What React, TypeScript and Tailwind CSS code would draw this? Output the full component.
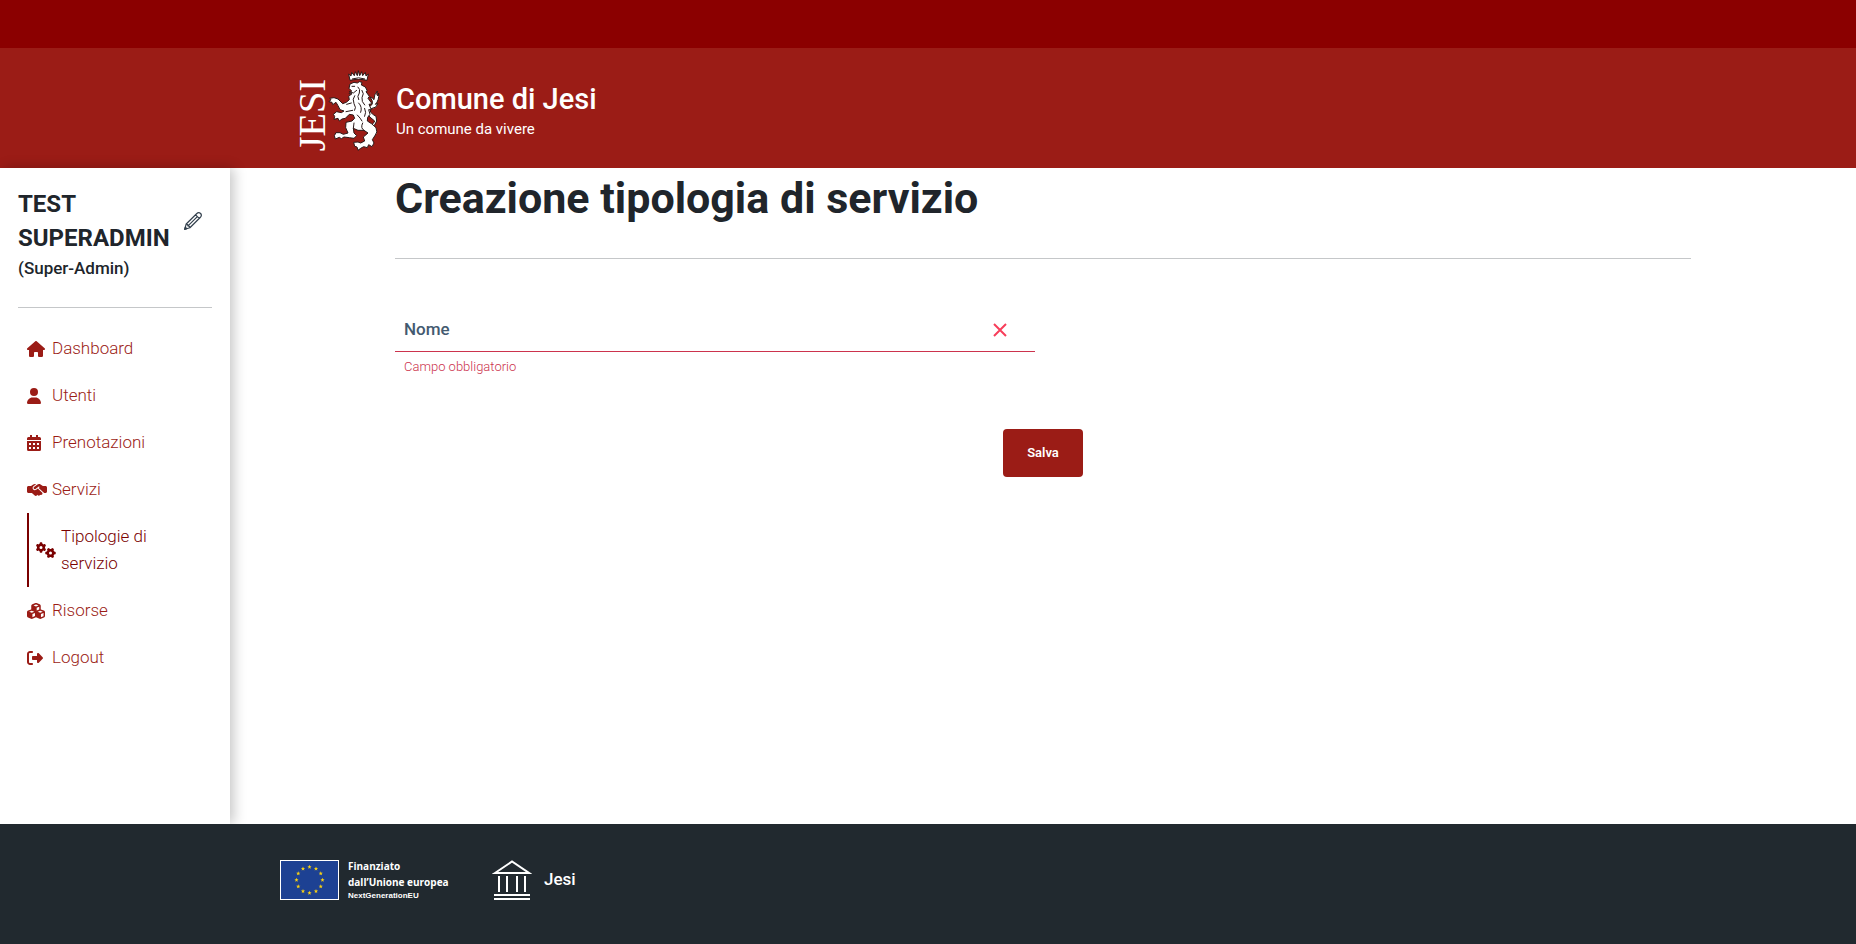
import { useState } from 'react';
import { FaCubes, FaGears, FaHandshakeSimple, FaHouse, FaRightFromBracket, FaUser } from 'react-icons/fa6';

const links = [
  { label: 'Dashboard', icon: FaHouse, size: 'w-[18px]' },
  { label: 'Utenti', icon: FaUser, size: 'w-[14px]' },
  { label: 'Prenotazioni', icon: CalendarIcon, size: 'w-[14px]' },
  { label: 'Servizi', icon: FaHandshakeSimple, size: 'w-5' },
  { label: 'Tipologie di servizio', icon: FaGears, size: 'w-5', active: true },
  { label: 'Risorse', icon: FaCubes, size: 'w-[18px]' },
  { label: 'Logout', icon: FaRightFromBracket, size: 'w-4' },
];

function CalendarIcon({ className }: { className?: string }) {
  return (
    <svg viewBox="0 0 14 16" className={className} fill="currentColor" aria-hidden="true">
      <path d="M3 0H5V2H9V0H11V2H12.5Q14 2 14 3.5V5H0V3.5Q0 2 1.5 2H3Z" />
      <path fillRule="evenodd" d="M0 6H14V14.5Q14 16 12.5 16H1.5Q0 16 0 14.5Z M2 8V10H4V8Z M6 8V10H8V8Z M10 8V10H12V8Z M2 12V14H4V12Z M6 12V14H8V12Z M10 12V14H12V12Z" />
    </svg>
  );
}

function JesiLogo() {
  return (
    <svg viewBox="-30 0 318 276" className="h-[92px] w-[106px] shrink-0" role="img" aria-label="Stemma di Jesi">
      <text transform="translate(106 259) rotate(-90)" fill="#fff" fontSize="115" fontFamily="Liberation Serif, serif">JESI</text>
      <g fill="#fff" stroke="#2a1a1a" strokeWidth="3" strokeLinejoin="round" transform="translate(-4 0)">
        <path d="M184 46 L180 27 L187 33 L189 22 L197 32 L200 20 L206 32 L209 17 L213 32 L219 20 L222 32 L230 22 L232 33 L239 27 L235 46 Q209 38 184 46Z" />
        <path d="M190 42 Q210 35 229 42" />
        <path d="M232 188 Q256 178 258 168 Q242 158 234 142 Q232 126 246 122 Q254 118 250 106 L244 96 Q254 100 256 104 Q256 88 266 78 Q262 92 268 92 L270 84 Q272 106 260 118 L268 116 Q262 130 250 130 Q242 132 246 142 Q254 150 262 154 L264 168 L258 180 Q248 190 238 194Z" />
        <path d="M181 70 L184 57 L196 52 L206 54 L212 50 L220 52 L218 60 L230 66 L236 78 L232 80 L242 94 L238 100 L250 116 L241 118 L248 134 L240 134 L244 148 Q234 156 236 168 Q248 174 262 188 Q268 202 260 210 L251 224 L256 234 L250 245 L240 239 L236 248 L225 245 L216 250 L208 256 L205 246 L198 244 L195 232 L208 231 L216 234 L228 228 L224 216 L238 204 L226 196 L208 196 L194 190 L196 204 L204 212 L196 220 L182 218 L166 216 L158 221 L152 217 L140 222 L137 212 L142 203 L154 203 L164 208 L178 204 L171 188 L172 172 L190 168 L198 160 L194 150 L182 148 L170 160 L160 162 L152 168 L148 160 L136 163 L138 154 L134 148 L144 140 L158 143 L166 138 L154 134 L148 122 L142 112 L132 119 L130 112 L121 110 L127 104 L123 100 L136 98 L148 102 L162 116 L173 112 L182 104 L180 94 L190 86 L181 86 L189 78Z" />
      </g>
      <g fill="none" stroke="#2a1a1a" strokeWidth="3" strokeLinecap="round" transform="translate(-4 0)">
        <path d="M190 64 L198 64 M182 80 L194 84 L204 76 M208 66 Q216 72 212 84 Q204 94 210 104 M220 76 Q228 86 220 98 Q218 110 228 120 M198 92 Q190 102 196 116 Q204 128 198 136 M210 114 Q222 126 216 142 M228 130 Q234 142 228 154 M174 118 L188 114 M172 140 L192 136 M206 150 Q216 160 220 168 M222 174 Q214 190 226 196 M194 190 L196 174" />
      </g>
    </svg>
  );
}

function EuFlag() {
  return (
    <svg viewBox="0 0 59 40" className="h-10 w-[59px] shrink-0" aria-hidden="true">
      <rect x=".5" y=".5" width="58" height="39" fill="#1d4193" stroke="#fff" />
      {Array.from({ length: 12 }, (_, i) => (
        <polygon
          key={i}
          fill="#f5cf14"
          points="0,-2.2 .6,-.7 2.1,-.7 .9,.3 1.3,1.8 0,.9 -1.3,1.8 -.9,.3 -2.1,-.7 -.6,-.7"
          transform={`translate(${29.5 + 13 * Math.sin((i * Math.PI) / 6)} ${20 - 13 * Math.cos((i * Math.PI) / 6)})`}
        />
      ))}
    </svg>
  );
}

function Sidebar() {
  return (
    <aside className="relative w-[230px] shrink-0 px-[18px] pt-[19px] shadow-[4px_0_12px_rgba(0,0,0,0.22)]">
      <div className="flex items-center">
        <h2 className="w-[166px] text-[24px] leading-[34px] font-bold">TEST SUPERADMIN</h2>
        <a href="#profilo" aria-label="Modifica profilo" className="text-[#33404d]">
          <svg viewBox="0 0 18 18" className="size-[18px]" fill="none" stroke="currentColor" strokeWidth="1.2" strokeLinejoin="round">
            <path d="M.7 17.3 L2.2 12 L12.6 1.8 Q14.6 -.2 16.6 1.5 Q18.3 3.5 16.2 5.5 L5.9 15.7Z M2.2 12 L3.6 12.5 L4 14 L5.5 14.4 L5.9 15.7 M4 13.9 L13.6 4.4 M11.6 2.8 L15.2 6.4" />
            <path d="M.7 17.3 L1.3 15.2 L2.8 16.7Z" fill="currentColor" />
          </svg>
        </a>
      </div>
      <p className="text-[17px] leading-[27px] font-medium">(Super-Admin)</p>
      <hr className="mt-[25px] border-[#c5c7c9]" />
      <nav className="mt-[17px] ml-[9px] text-[17px] leading-[27px] font-light">
        {links.map(({ label, icon: Icon, size, active }) => (
          <a
            key={label}
            href={`#${label.toLowerCase().replaceAll(' ', '-')}`}
            className={`flex items-center gap-[5px] py-[10px] ${active ? 'border-l-2 border-[#7a0000] pr-8 pl-[7px] text-[#7a0000]' : 'text-[#9b1c16]'}`}
          >
            <span className="w-5 shrink-0"><Icon className={`h-4 ${size}`} /></span>
            {label}
          </a>
        ))}
      </nav>
    </aside>
  );
}

export default function App() {
  const [name, setName] = useState('');
  return (
    <div className="flex min-h-screen flex-col bg-white font-[Roboto,sans-serif] text-[#20252b]">
      <header className="text-white">
        <div className="h-12 bg-[#8b0000]" />
        <div className="bg-[#9b1c16]">
          <div className="mx-auto flex h-[120px] max-w-[1320px] items-center gap-[10px] px-3 pt-[6px]">
            <JesiLogo />
            <div>
              <div className="text-[29px] leading-9 font-medium">Comune di Jesi</div>
              <div className="text-[15px] leading-6">Un comune da vivere</div>
            </div>
          </div>
        </div>
      </header>
      <div className="flex grow">
        <Sidebar />
        <main className="grow px-3">
          <div className="mx-auto max-w-[1296px]">
            <h1 className="pt-1 text-[43px] leading-[52px] font-bold">Creazione tipologia di servizio</h1>
            <hr className="mt-[34px] border-[#c5c7c9]" />
            <form className="pt-[50px]" onSubmit={(e) => e.preventDefault()}>
              <div className="w-1/2 pr-2">
                <div className="relative flex h-[43px] items-center border-b border-[#cc334d]">
                  {!name && <label htmlFor="nome" className="pointer-events-none absolute left-[9px] text-[17px] font-medium text-[#435a70]">Nome</label>}
                  <input id="nome" aria-invalid={!name} aria-label="Nome" required value={name} onChange={(e) => setName(e.target.value)} className="h-full w-full px-[9px] text-[17px] outline-none" />
                  <svg viewBox="0 0 14 14" className="absolute right-7 size-[14px]" fill="none" stroke="#f73e5a" strokeWidth="2"><path d="M1 1 L13 13 M13 1 L1 13" /></svg>
                </div>
                <p className="pt-1 pl-[9px] text-[13px] leading-[21px] font-light text-[#cc334d]">Campo obbligatorio</p>
              </div>
              <div className="mt-[52px] flex justify-center">
                <button type="submit" className="h-12 w-20 rounded bg-[#9b1c16] text-[13px] font-semibold text-white">Salva</button>
              </div>
            </form>
          </div>
        </main>
      </div>
      <footer className="relative bg-[#21292f] text-white">
        <div className="mx-auto flex h-[120px] max-w-[1320px] items-center px-3 pb-[8px]">
          <EuFlag />
          <div className="ml-[9px] w-[140px] font-['Open_Sans',sans-serif] font-bold">
            <div className="text-[10px] leading-4">Finanziato<br />dall’Unione europea</div>
            <div className="font-['Liberation_Sans',sans-serif] text-[8px] leading-3">NextGenerationEU</div>
          </div>
          <svg viewBox="0 0 40 40" className="ml-1 h-10 w-10 shrink-0" fill="none" stroke="#fff" strokeWidth="2" aria-hidden="true">
            <path d="M3 13 L20 1.5 L37 13Z M7 16 V32 M15 16 V32 M25 16 V32 M33 16 V32 M2 35 H38 M2 39 H38" />
          </svg>
          <span className="ml-3 text-[17px] font-medium">Jesi</span>
        </div>
      </footer>
    </div>
  );
}
